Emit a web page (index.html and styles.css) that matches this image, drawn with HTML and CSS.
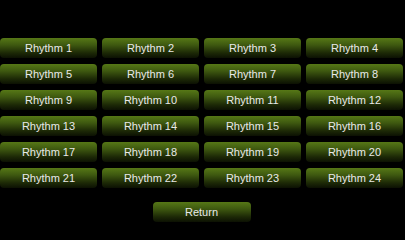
FILE: index.html
```html
<!DOCTYPE html>
<html>
<head>
<meta charset="utf-8">
<link rel="stylesheet" href="styles.css">
</head>
<body>
<div class="screen">
  <div class="grid">
    <div class="btn">Rhythm 1</div>
    <div class="btn">Rhythm 2</div>
    <div class="btn">Rhythm 3</div>
    <div class="btn">Rhythm 4</div>
    <div class="btn">Rhythm 5</div>
    <div class="btn">Rhythm 6</div>
    <div class="btn">Rhythm 7</div>
    <div class="btn">Rhythm 8</div>
    <div class="btn">Rhythm 9</div>
    <div class="btn">Rhythm 10</div>
    <div class="btn">Rhythm 11</div>
    <div class="btn">Rhythm 12</div>
    <div class="btn">Rhythm 13</div>
    <div class="btn">Rhythm 14</div>
    <div class="btn">Rhythm 15</div>
    <div class="btn">Rhythm 16</div>
    <div class="btn">Rhythm 17</div>
    <div class="btn">Rhythm 18</div>
    <div class="btn">Rhythm 19</div>
    <div class="btn">Rhythm 20</div>
    <div class="btn">Rhythm 21</div>
    <div class="btn">Rhythm 22</div>
    <div class="btn">Rhythm 23</div>
    <div class="btn">Rhythm 24</div>
  </div>
  <div class="footer">
    <div class="btn return">Return</div>
  </div>
</div>
</body>
</html>
```
FILE: styles.css
```css
html, body {
  margin: 0;
  padding: 0;
  background: #000;
}
.screen {
  width: 405px;
  height: 228px;
  padding-top: 38px;
  box-sizing: border-box;
  overflow: hidden;
  font-family: "Liberation Sans", Arial, sans-serif;
}
.grid {
  display: grid;
  grid-template-columns: 97px 97px 97px 97px;
  column-gap: 4px;
  justify-content: space-between;
  width: 403px;
  row-gap: 6px;
  grid-auto-rows: 20px;
}
.btn {
  display: flex;
  align-items: center;
  justify-content: center;
  height: 20px;
  border-radius: 4px;
  background: linear-gradient(to bottom, #567816 0%, #3e5810 35%, #1c2806 75%, #0c1103 100%);
  color: #e9e9e9;
  font-size: 11px;
}
.footer {
  display: flex;
  justify-content: center;
  margin-top: 14px;
  padding-right: 2px;
}
.return {
  width: 98px;
  height: 20px;
}
```
